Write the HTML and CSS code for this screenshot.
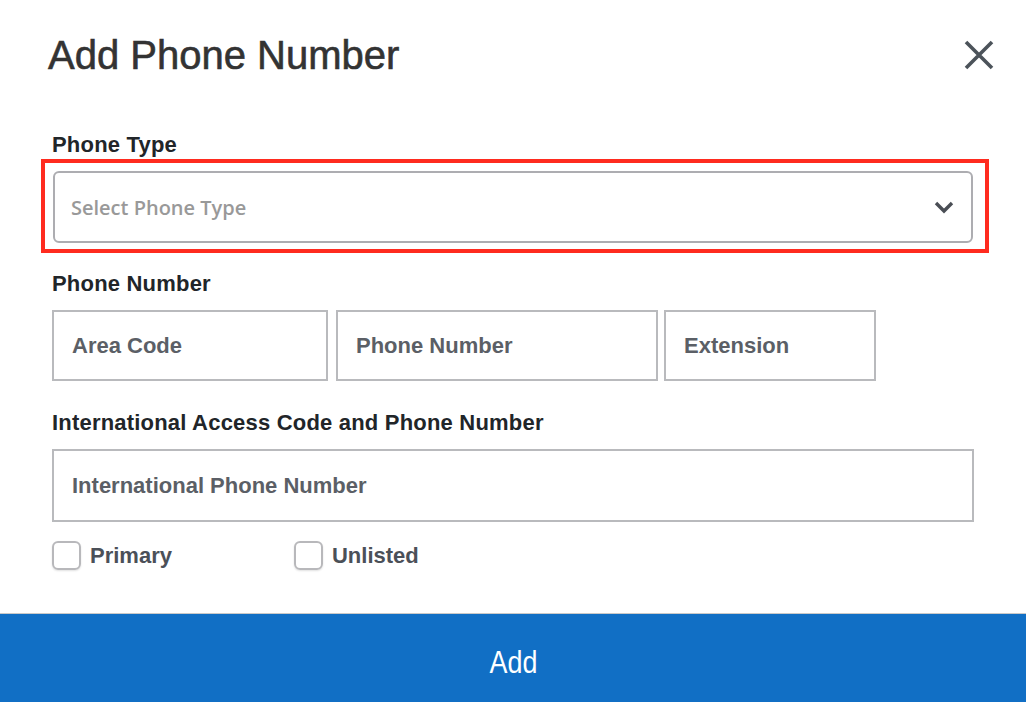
FILE: index.html
```html
<!DOCTYPE html>
<html lang="en">

<head>
    <meta charset="UTF-8">
    <meta name="viewport" content="width=device-width, initial-scale=1.0">
    <title>Add Phone Number</title>
    <link rel="stylesheet" href="styles.css">
</head>

<body>
    <div class="modal">
        <div class="modal-header">
            <h1 class="modal-title">Add Phone Number</h1>
            <button class="close-btn" aria-label="Close">
                <svg width="30" height="30" viewBox="0 0 30 30">
                    <path d="M2 2 L28 28 M28 2 L2 28" stroke="#4c535a" stroke-width="3.6" fill="none" />
                </svg>
            </button>
        </div>

        <div class="modal-body">
            <label class="field-label">Phone Type</label>
            <div class="highlight">
                <div class="select">
                    <span class="select-placeholder">Select Phone Type</span>
                    <svg class="chevron" width="20" height="13" viewBox="0 0 20 13">
                        <path d="M2 2 L10 10 L18 2" stroke="#4a4e55" stroke-width="3.4" fill="none" />
                    </svg>
                </div>
            </div>

            <label class="field-label label-gap">Phone Number</label>
            <div class="phone-row">
                <div class="input area-code">Area Code</div>
                <div class="input phone-number">Phone Number</div>
                <div class="input extension">Extension</div>
            </div>

            <label class="field-label label-gap-lg">International Access Code and Phone Number</label>
            <div class="input intl">International Phone Number</div>

            <div class="checks">
                <label class="check"><span class="box"></span>Primary</label>
                <label class="check"><span class="box"></span>Unlisted</label>
            </div>
        </div>

        <div class="modal-footer">
            <button class="add-btn"><span class="add-text">Add</span></button>
        </div>
    </div>
</body>

</html>
```

FILE: styles.css
```css
body {
    margin: 0;
    background-color: #fff;
    font-family: "Liberation Sans", Arial, sans-serif;
}

.modal {
    width: 1026px;
    height: 702px;
    display: flex;
    flex-direction: column;
}

.modal-header {
    display: flex;
    justify-content: space-between;
    align-items: center;
    padding: 32px 32px 0 48px;
    height: 46px;
}

.modal-title {
    margin: 0;
    font-size: 40px;
    font-weight: normal;
    line-height: 46px;
    color: #333;
    -webkit-text-stroke: 0.6px #333;
}

.close-btn {
    background: none;
    border: none;
    padding: 0;
    width: 30px;
    height: 30px;
    cursor: pointer;
}

.modal-body {
    padding: 54px 52px 0 52px;
    flex: 1;
}

.field-label {
    display: block;
    font-size: 22px;
    font-weight: bold;
    line-height: 26px;
    letter-spacing: 0.2px;
    color: #212529;
    margin-bottom: 1px;
}

.label-gap {
    margin-top: 18px;
    margin-bottom: 13px;
}

.label-gap-lg {
    margin-top: 29px;
    margin-bottom: 13px;
}

.highlight {
    border: 4px solid #ff2b1f;
    margin: 0 -15px 0 -11px;
    padding: 8px 12px 6px 8px;
}

.select {
    height: 72px;
    box-sizing: border-box;
    border: 2px solid #adadb1;
    border-radius: 6px;
    display: flex;
    align-items: center;
    justify-content: space-between;
    padding: 0 17px 0 16px;
}

.select-placeholder {
    font-family: "Open Sans", sans-serif;
    font-weight: 600;
    font-size: 20px;
    color: #999;
}

.phone-row {
    display: flex;
}

.input {
    box-sizing: border-box;
    height: 71px;
    border: 2px solid #b9babd;
    display: flex;
    align-items: center;
    padding-left: 18px;
    font-size: 22px;
    font-weight: bold;
    color: #5b5f66;
}

.area-code {
    width: 276px;
    margin-right: 8px;
}

.phone-number {
    width: 322px;
    margin-right: 6px;
}

.extension {
    width: 212px;
}

.intl {
    height: 73px;
}

.checks {
    display: flex;
    gap: 122px;
    margin-top: 19px;
}

.check {
    display: flex;
    align-items: center;
    gap: 9px;
    font-size: 22px;
    font-weight: bold;
    color: #4b5058;
}

.box {
    width: 29px;
    height: 29px;
    box-sizing: border-box;
    border: 2px solid #b8b8bb;
    border-radius: 6px;
    box-shadow: 0 1px 2px rgba(0, 0, 0, 0.12);
}

.modal-footer {
    border-top: 1px solid #c9c9c9;
}

.add-btn {
    display: block;
    width: 100%;
    height: 88px;
    padding: 8px 0 0 0;
    border: none;
    background-color: #116fc5;
    color: #fff;
    font-family: "Liberation Sans", sans-serif;
    font-size: 32px;
    cursor: pointer;
}

.add-text {
    display: inline-block;
    transform: scaleX(0.84);
}
```
